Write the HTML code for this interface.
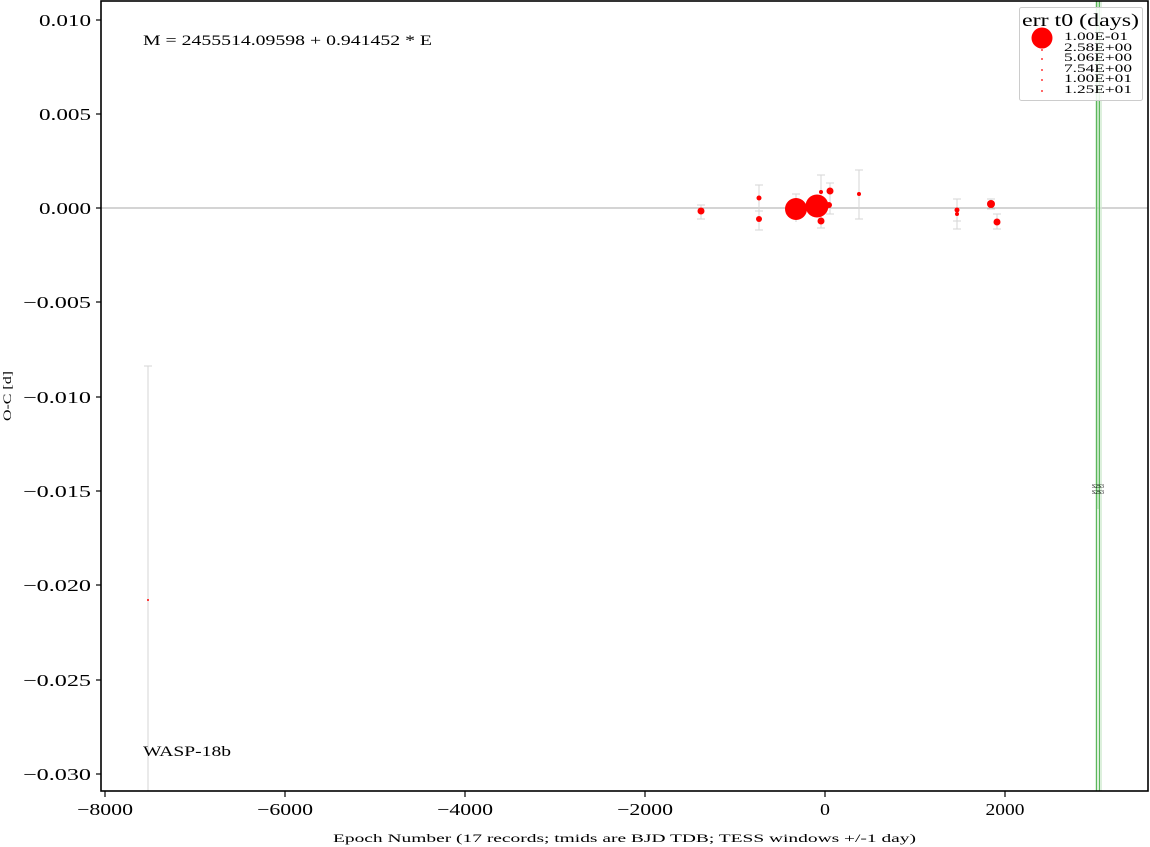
<!DOCTYPE html>
<html><head><meta charset="utf-8"><style>
html,body{margin:0;padding:0;background:#fff;}
svg{display:block;font-family:"Liberation Serif",serif;}
</style></head><body>
<svg width="1150" height="847" viewBox="0 0 1150 847" xmlns="http://www.w3.org/2000/svg">
<rect width="1150" height="847" fill="#fff"/>
<line x1="101" y1="208" x2="1148" y2="208" stroke="#a8a8a8" stroke-width="1"/>
<rect x="1095" y="1" width="7" height="790" fill="#cfe9cf" opacity="0.7"/>
<line x1="1096.5" y1="1" x2="1096.5" y2="791" stroke="#5cb85c" stroke-width="1"/>
<line x1="1099.5" y1="1" x2="1099.5" y2="791" stroke="#5cb85c" stroke-width="1"/>
<line x1="1098" y1="1" x2="1098" y2="509" stroke="#7cc87c" stroke-width="0.6"/>
<text x="1098" y="488" font-size="6" text-anchor="middle" textLength="12" lengthAdjust="spacingAndGlyphs">S2S3</text>
<text x="1098" y="494" font-size="6" text-anchor="middle" textLength="12" lengthAdjust="spacingAndGlyphs">S2S3</text>
<g stroke="#d6d6d6" stroke-width="1" fill="none">
<line x1="148" y1="366" x2="148" y2="791"/><line x1="144" y1="366" x2="152" y2="366"/>
<line x1="701" y1="205" x2="701" y2="219"/><line x1="697" y1="205" x2="705" y2="205"/><line x1="697" y1="219" x2="705" y2="219"/>
<line x1="759" y1="185" x2="759" y2="230"/><line x1="755" y1="185" x2="763" y2="185"/><line x1="755" y1="230" x2="763" y2="230"/>
<line x1="755" y1="211" x2="763" y2="211"/>
<line x1="796" y1="194" x2="796" y2="222"/><line x1="792" y1="194" x2="800" y2="194"/>
<line x1="821" y1="175" x2="821" y2="228"/><line x1="817" y1="175" x2="825" y2="175"/><line x1="817" y1="228" x2="825" y2="228"/>
<line x1="830" y1="183" x2="830" y2="214"/><line x1="826" y1="183" x2="834" y2="183"/><line x1="826" y1="214" x2="834" y2="214"/>
<line x1="859" y1="170" x2="859" y2="219"/><line x1="855" y1="170" x2="863" y2="170"/><line x1="855" y1="219" x2="863" y2="219"/>
<line x1="957" y1="199" x2="957" y2="229"/><line x1="953" y1="199" x2="961" y2="199"/><line x1="953" y1="229" x2="961" y2="229"/><line x1="953" y1="221" x2="961" y2="221"/>
<line x1="991" y1="199" x2="991" y2="209"/><line x1="987" y1="199" x2="995" y2="199"/><line x1="987" y1="209" x2="995" y2="209"/>
<line x1="997" y1="214" x2="997" y2="229"/><line x1="993" y1="214" x2="1001" y2="214"/><line x1="993" y1="229" x2="1001" y2="229"/>
</g>
<g fill="#ff0000">
<circle cx="148" cy="600" r="1"/>
<circle cx="701" cy="211" r="3.5"/>
<circle cx="759" cy="198" r="2.5"/>
<circle cx="759" cy="219" r="3"/>
<circle cx="796" cy="209" r="11"/>
<circle cx="817" cy="206" r="11.5"/>
<circle cx="821" cy="192" r="2"/>
<circle cx="830" cy="191" r="3.5"/>
<circle cx="829" cy="205" r="3"/>
<circle cx="821" cy="221" r="3.5"/>
<circle cx="859" cy="194" r="2"/>
<circle cx="957" cy="210" r="2.5"/>
<circle cx="957" cy="214" r="2"/>
<circle cx="991" cy="204" r="4"/>
<circle cx="997" cy="222" r="3.5"/>
</g>
<rect x="101" y="1" width="1047" height="790" fill="none" stroke="#000" stroke-width="1.6"/>
<g stroke="#000" stroke-width="1.2">
<line x1="96" y1="20" x2="101" y2="20"/><line x1="96" y1="114" x2="101" y2="114"/>
<line x1="96" y1="208" x2="101" y2="208"/><line x1="96" y1="302" x2="101" y2="302"/>
<line x1="96" y1="397" x2="101" y2="397"/><line x1="96" y1="491" x2="101" y2="491"/>
<line x1="96" y1="585" x2="101" y2="585"/><line x1="96" y1="680" x2="101" y2="680"/>
<line x1="96" y1="774" x2="101" y2="774"/>
<line x1="105" y1="791" x2="105" y2="797"/><line x1="285" y1="791" x2="285" y2="797"/>
<line x1="465" y1="791" x2="465" y2="797"/><line x1="645" y1="791" x2="645" y2="797"/>
<line x1="825" y1="791" x2="825" y2="797"/><line x1="1005" y1="791" x2="1005" y2="797"/>
</g>
<g font-size="17" text-anchor="end">
<text x="91" y="26" textLength="52" lengthAdjust="spacingAndGlyphs">0.010</text>
<text x="91" y="120" textLength="52" lengthAdjust="spacingAndGlyphs">0.005</text>
<text x="91" y="214" textLength="52" lengthAdjust="spacingAndGlyphs">0.000</text>
<text x="91" y="308" textLength="68" lengthAdjust="spacingAndGlyphs">−0.005</text>
<text x="91" y="403" textLength="68" lengthAdjust="spacingAndGlyphs">−0.010</text>
<text x="91" y="497" textLength="68" lengthAdjust="spacingAndGlyphs">−0.015</text>
<text x="91" y="591" textLength="68" lengthAdjust="spacingAndGlyphs">−0.020</text>
<text x="91" y="686" textLength="68" lengthAdjust="spacingAndGlyphs">−0.025</text>
<text x="91" y="780" textLength="68" lengthAdjust="spacingAndGlyphs">−0.030</text>
</g>
<g font-size="17" text-anchor="middle">
<text x="105" y="815" textLength="56" lengthAdjust="spacingAndGlyphs">−8000</text>
<text x="285" y="815" textLength="56" lengthAdjust="spacingAndGlyphs">−6000</text>
<text x="465" y="815" textLength="56" lengthAdjust="spacingAndGlyphs">−4000</text>
<text x="645" y="815" textLength="56" lengthAdjust="spacingAndGlyphs">−2000</text>
<text x="825" y="815" textLength="10" lengthAdjust="spacingAndGlyphs">0</text>
<text x="1005" y="815" textLength="39" lengthAdjust="spacingAndGlyphs">2000</text>
</g>
<text x="333" y="842" font-size="12" textLength="583" lengthAdjust="spacingAndGlyphs">Epoch Number (17 records; tmids are BJD TDB; TESS windows +/-1 day)</text>
<text transform="translate(11,396) rotate(-90)" font-size="12" text-anchor="middle" textLength="50" lengthAdjust="spacingAndGlyphs">O-C [d]</text>
<text x="143" y="45" font-size="15" textLength="289" lengthAdjust="spacingAndGlyphs">M = 2455514.09598 + 0.941452 * E</text>
<text x="143" y="756" font-size="15" textLength="88" lengthAdjust="spacingAndGlyphs">WASP-18b</text>
<rect x="1019.5" y="7.5" width="123" height="93" rx="2" fill="#fff" fill-opacity="0.85" stroke="#ccc" stroke-width="1"/>
<text x="1022" y="26" font-size="18" textLength="117" lengthAdjust="spacingAndGlyphs">err t0 (days)</text>
<circle cx="1042" cy="38" r="10.5" fill="#ff0000"/>
<g fill="#ff0000"><circle cx="1042" cy="50" r="0.9"/><circle cx="1042" cy="59" r="0.9"/><circle cx="1042" cy="70" r="0.9"/><circle cx="1042" cy="80" r="0.9"/><circle cx="1042" cy="91" r="0.9"/></g>
<g font-size="12">
<text x="1064" y="40" textLength="64" lengthAdjust="spacingAndGlyphs">1.00E-01</text>
<text x="1064" y="51" textLength="68" lengthAdjust="spacingAndGlyphs">2.58E+00</text>
<text x="1064" y="61" textLength="68" lengthAdjust="spacingAndGlyphs">5.06E+00</text>
<text x="1064" y="72" textLength="68" lengthAdjust="spacingAndGlyphs">7.54E+00</text>
<text x="1064" y="82" textLength="68" lengthAdjust="spacingAndGlyphs">1.00E+01</text>
<text x="1064" y="93" textLength="68" lengthAdjust="spacingAndGlyphs">1.25E+01</text>
</g>
</svg>
</body></html>
